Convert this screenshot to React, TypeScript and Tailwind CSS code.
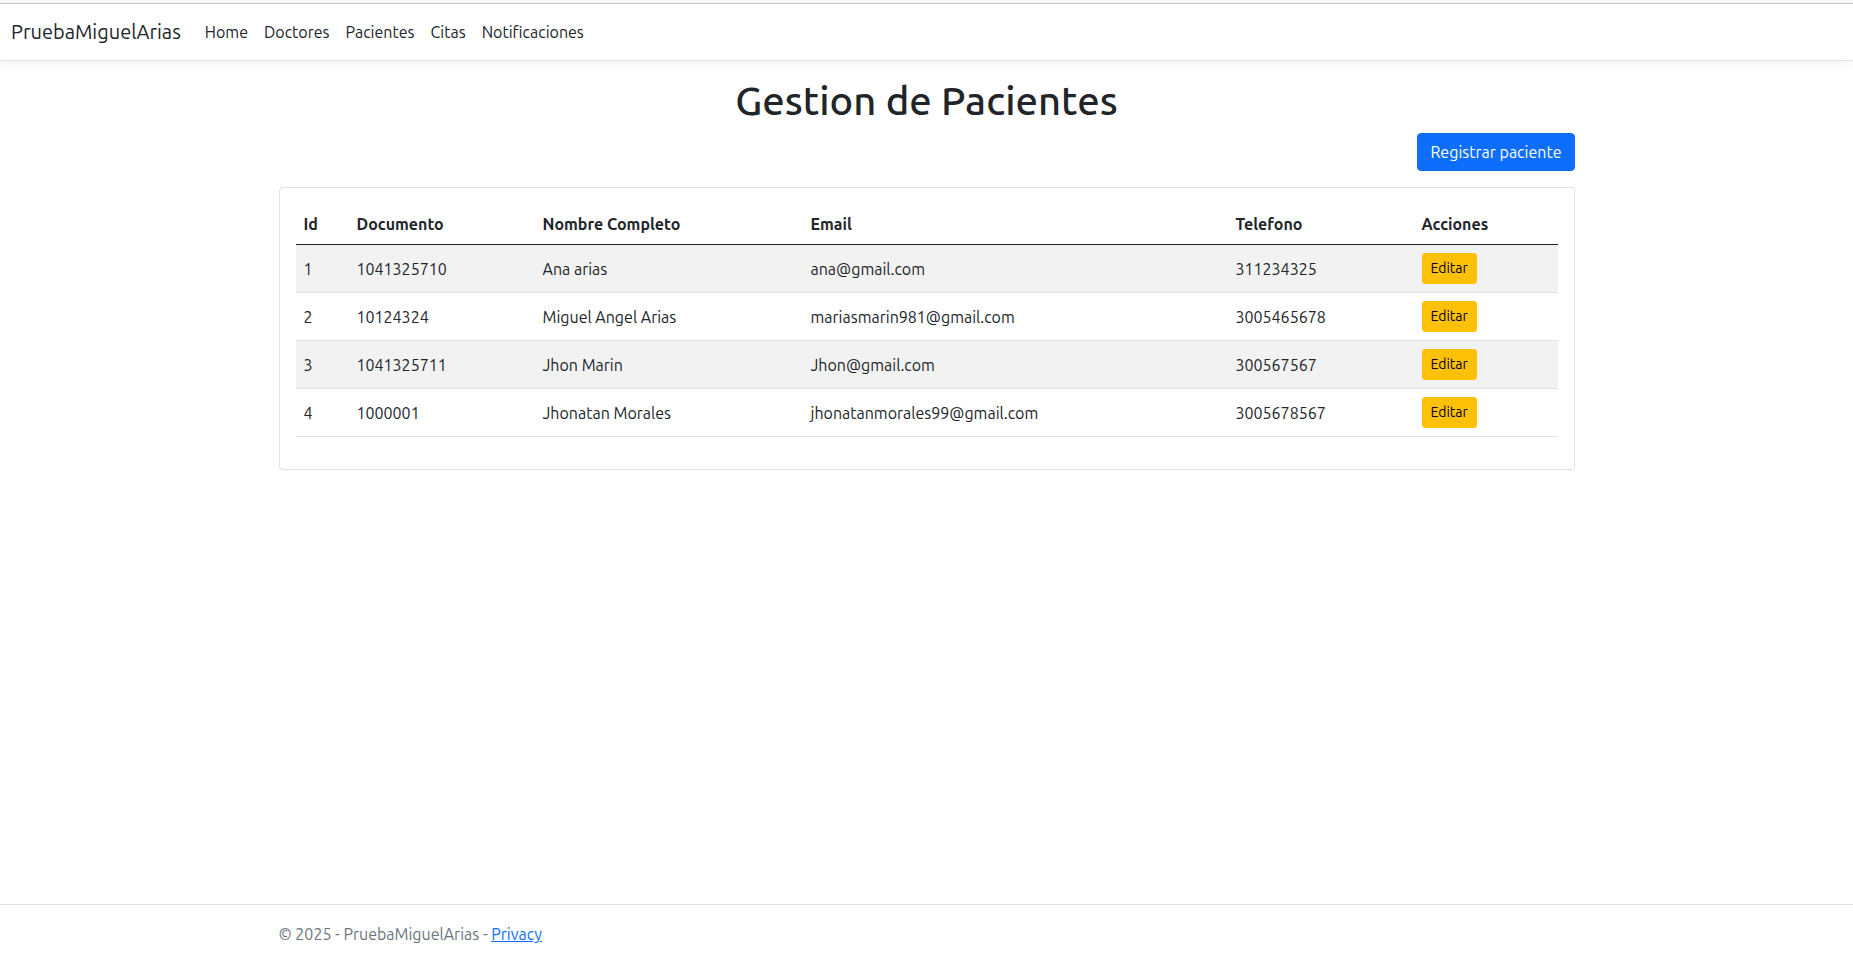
type Patient = {
  id: number;
  document: string;
  name: string;
  email: string;
  phone: string;
};

const patients: Patient[] = [
  { id: 1, document: "1041325710", name: "Ana arias", email: "ana@gmail.com", phone: "311234325" },
  { id: 2, document: "10124324", name: "Miguel Angel Arias", email: "mariasmarin981@gmail.com", phone: "3005465678" },
  { id: 3, document: "1041325711", name: "Jhon Marin", email: "Jhon@gmail.com", phone: "300567567" },
  { id: 4, document: "1000001", name: "Jhonatan Morales", email: "jhonatanmorales99@gmail.com", phone: "3005678567" },
];

const links = ["Home", "Doctores", "Pacientes", "Citas", "Notificaciones"];

const columns = [
  { title: "Id", width: "w-[53px]" },
  { title: "Documento", width: "w-[186px]" },
  { title: "Nombre Completo", width: "w-[268px]" },
  { title: "Email", width: "w-auto" },
  { title: "Telefono", width: "w-[186px]" },
  { title: "Acciones", width: "w-[144px]" },
];

function Navbar() {
  return (
    <header>
      <nav className="flex flex-wrap items-center border-b border-[#dee2e6] bg-white px-[11px] py-2 shadow-[0_4px_12px_rgba(0,0,0,0.05)]">
        <a href="#" className="mr-4 text-xl leading-[30px] text-[#212529]">
          PruebaMiguelArias
        </a>
        <ul className="flex flex-wrap">
          {links.map((link) => (
            <li key={link}>
              <a href="#" className="block p-2 leading-6 text-[#212529]">
                {link}
              </a>
            </li>
          ))}
        </ul>
      </nav>
    </header>
  );
}

function PatientTable() {
  return (
    <div className="rounded border border-[#dee2e6] px-4 pt-4 pb-8">
      <table className="w-full table-fixed border-collapse text-left">
        <thead>
          <tr className="border-b border-[#212529]">
            {columns.map(({ title, width }) => (
              <th key={title} scope="col" className={`${width} p-2 leading-6 font-bold`}>
                {title}
              </th>
            ))}
          </tr>
        </thead>
        <tbody>
          {patients.map((p) => (
            <tr key={p.id} className="h-12 border-b border-[#dee2e6] odd:bg-[#f2f2f2]">
              <td className="px-2">{p.id}</td>
              <td className="px-2">{p.document}</td>
              <td className="px-2">{p.name}</td>
              <td className="px-2">{p.email}</td>
              <td className="px-2">{p.phone}</td>
              <td className="px-2">
                <a
                  href="#"
                  className="block w-fit rounded-[3px] border border-[#ffc107] bg-[#ffc107] px-2 py-1 text-sm leading-[21px] text-black"
                >
                  Editar
                </a>
              </td>
            </tr>
          ))}
        </tbody>
      </table>
    </div>
  );
}

export default function App() {
  return (
    <div className="flex min-h-screen flex-col bg-white font-[Ubuntu,'Noto_Sans',sans-serif] text-base leading-6 text-[#212529]">
      <div className="h-1 border-b border-[#c9c9c9] bg-[#f9f9f9]" />
      <Navbar />
      <main className="mx-auto mt-4 w-full max-w-[1320px] flex-1 px-3">
        <h1 className="mb-2 text-center text-[40px] leading-12 font-medium">Gestion de Pacientes</h1>
        <div className="mb-4 flex justify-end">
          <a href="#" className="rounded border border-[#0d6efd] bg-[#0d6efd] px-3 py-1.5 leading-6 text-white">
            Registrar paciente
          </a>
        </div>
        <PatientTable />
      </main>
      <footer className="border-t border-[#dee2e6] text-[#6c757d]">
        <div className="mx-auto max-w-[1320px] px-3 leading-[58px]">
          © 2025 - PruebaMiguelArias -{" "}
          <a href="#" className="text-[#0d6efd] underline">
            Privacy
          </a>
        </div>
      </footer>
    </div>
  );
}
